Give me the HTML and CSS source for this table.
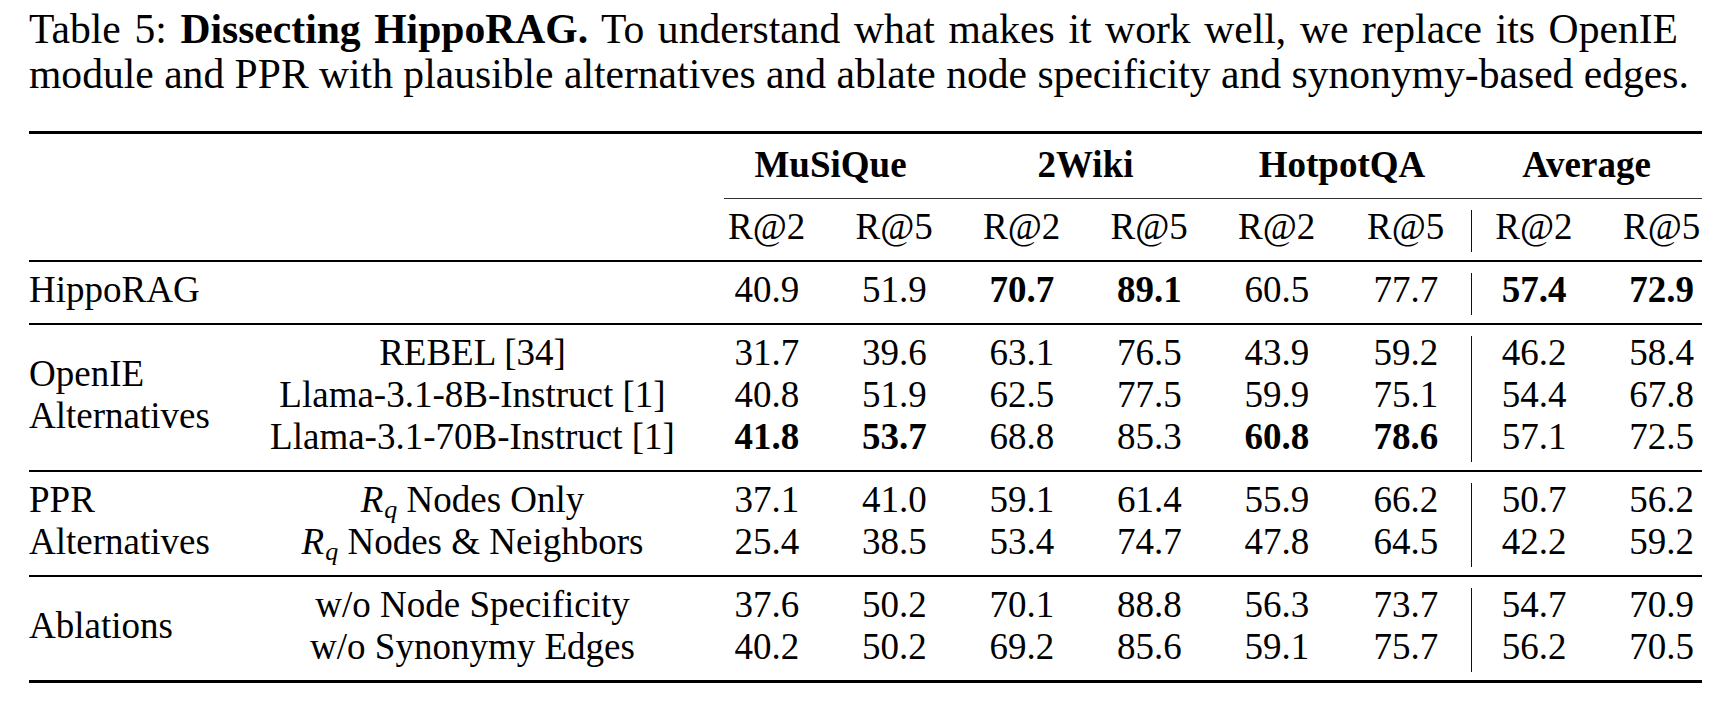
FILE: index.html
```html
<!DOCTYPE html>
<html lang="en">
<head>
<meta charset="utf-8">
<title>Table 5: Dissecting HippoRAG</title>
<link rel="stylesheet" href="styles.css">
</head>
<body>
<div class="page">
  <p class="caption"><span class="cl cl1">Table 5: <b>Dissecting HippoRAG.</b> To understand what makes it work well, we replace its OpenIE</span><span class="cl">module and PPR with plausible alternatives and ablate node specificity and synonymy-based edges.</span></p>
  <div class="tbl">
    <div class="grp head">
      <div class="cell lead"></div>
      <div class="cell ds">MuSiQue</div>
      <div class="cell ds">2Wiki</div>
      <div class="cell ds">HotpotQA</div>
      <div class="cell ds">Average</div>
      <div class="cmid"></div>
      <div class="cell lead"></div>
      <div class="cell n">R@2</div>
      <div class="cell n">R@5</div>
      <div class="cell n">R@2</div>
      <div class="cell n">R@5</div>
      <div class="cell n">R@2</div>
      <div class="cell n">R@5</div>
      <div class="cell n bar">R@2</div>
      <div class="cell n last">R@5</div>
    </div>

    <div class="grp">
      <div class="cell lab">HippoRAG</div>
      <div class="cell mid"></div>
      <div class="cell n">40.9</div>
      <div class="cell n">51.9</div>
      <div class="cell n"><b>70.7</b></div>
      <div class="cell n"><b>89.1</b></div>
      <div class="cell n">60.5</div>
      <div class="cell n">77.7</div>
      <div class="cell n bar"><b>57.4</b></div>
      <div class="cell n last"><b>72.9</b></div>
    </div>

    <div class="grp">
      <div class="lab multi span3"><span>OpenIE</span><span>Alternatives</span></div>
      <div class="cell mid">REBEL [34]</div>
      <div class="cell n">31.7</div>
      <div class="cell n">39.6</div>
      <div class="cell n">63.1</div>
      <div class="cell n">76.5</div>
      <div class="cell n">43.9</div>
      <div class="cell n">59.2</div>
      <div class="cell n bar">46.2</div>
      <div class="cell n last">58.4</div>

      <div class="cell mid">Llama-3.1-8B-Instruct [1]</div>
      <div class="cell n">40.8</div>
      <div class="cell n">51.9</div>
      <div class="cell n">62.5</div>
      <div class="cell n">77.5</div>
      <div class="cell n">59.9</div>
      <div class="cell n">75.1</div>
      <div class="cell n bar">54.4</div>
      <div class="cell n last">67.8</div>

      <div class="cell mid">Llama-3.1-70B-Instruct [1]</div>
      <div class="cell n"><b>41.8</b></div>
      <div class="cell n"><b>53.7</b></div>
      <div class="cell n">68.8</div>
      <div class="cell n">85.3</div>
      <div class="cell n"><b>60.8</b></div>
      <div class="cell n"><b>78.6</b></div>
      <div class="cell n bar">57.1</div>
      <div class="cell n last">72.5</div>
    </div>

    <div class="grp">
      <div class="cell lab">PPR</div>
      <div class="cell mid"><i class="var">R</i><sub class="sub">q</sub> Nodes Only</div>
      <div class="cell n">37.1</div>
      <div class="cell n">41.0</div>
      <div class="cell n">59.1</div>
      <div class="cell n">61.4</div>
      <div class="cell n">55.9</div>
      <div class="cell n">66.2</div>
      <div class="cell n bar">50.7</div>
      <div class="cell n last">56.2</div>

      <div class="cell lab">Alternatives</div>
      <div class="cell mid"><i class="var">R</i><sub class="sub">q</sub> Nodes &amp; Neighbors</div>
      <div class="cell n">25.4</div>
      <div class="cell n">38.5</div>
      <div class="cell n">53.4</div>
      <div class="cell n">74.7</div>
      <div class="cell n">47.8</div>
      <div class="cell n">64.5</div>
      <div class="cell n bar">42.2</div>
      <div class="cell n last">59.2</div>
    </div>

    <div class="grp foot">
      <div class="lab multi span2"><span>Ablations</span></div>
      <div class="cell mid">w/o Node Specificity</div>
      <div class="cell n">37.6</div>
      <div class="cell n">50.2</div>
      <div class="cell n">70.1</div>
      <div class="cell n">88.8</div>
      <div class="cell n">56.3</div>
      <div class="cell n">73.7</div>
      <div class="cell n bar">54.7</div>
      <div class="cell n last">70.9</div>

      <div class="cell mid">w/o Synonymy Edges</div>
      <div class="cell n">40.2</div>
      <div class="cell n">50.2</div>
      <div class="cell n">69.2</div>
      <div class="cell n">85.6</div>
      <div class="cell n">59.1</div>
      <div class="cell n">75.7</div>
      <div class="cell n bar">56.2</div>
      <div class="cell n last">70.5</div>
    </div>
  </div>
</div>
</body>
</html>
```

FILE: styles.css
```css
* {
  box-sizing: border-box;
}

html, body {
  margin: 0;
  background: #ffffff;
}

body {
  color: #000000;
  font-family: "Liberation Serif", "Times New Roman", serif;
}

.page {
  padding: 7px 0 0 29px;
}

.caption {
  margin: 0;
  font-size: 41.6px;
  line-height: 45px;
}

.cl {
  display: block;
  white-space: nowrap;
}

.cl1 {
  width: 1649px;
  text-align: justify;
  text-align-last: justify;
}

.caption b {
  font-weight: bold;
}

.tbl {
  margin-top: 34px;
  width: 1673px;
}

.grp {
  display: grid;
  grid-template-columns: 213px 461px repeat(5, 127.5px) 130.5px 125px 106px;
  border-top: 2px solid #000000;
  padding: 11px 0 8px;
}

.grp.head {
  border-top-width: 3px;
  padding-top: 14px;
}

.grp.foot {
  border-bottom: 3px solid #000000;
}

.cell {
  height: 42px;
  font-size: 37px;
  line-height: 34px;
  padding-bottom: 8px;
  white-space: nowrap;
}

.lead {
  grid-column: 1 / span 2;
}

.ds {
  grid-column: span 2;
  text-align: center;
  font-weight: bold;
}

.cmid {
  grid-column: 3 / -1;
  height: 1px;
  background: #333333;
  margin: 8px 0 11px 21px;
}

.lab {
  text-align: left;
}

.mid {
  text-align: center;
}

.n {
  text-align: center;
}

.n b {
  font-weight: bold;
}

.bar {
  border-left: 1.5px solid #111111;
}

.last {
  padding-left: 27px;
  padding-right: 2px;
}

.multi {
  display: flex;
  flex-direction: column;
  justify-content: center;
  font-size: 37px;
  line-height: 42px;
  padding-bottom: 8px;
  white-space: nowrap;
}

.span3 {
  grid-row: span 3;
}

.span2 {
  grid-row: span 2;
}

.var {
  font-style: italic;
}

.sub {
  font-style: italic;
  font-size: 26px;
  line-height: 0;
  vertical-align: -6px;
  margin-left: 1px;
}
```
